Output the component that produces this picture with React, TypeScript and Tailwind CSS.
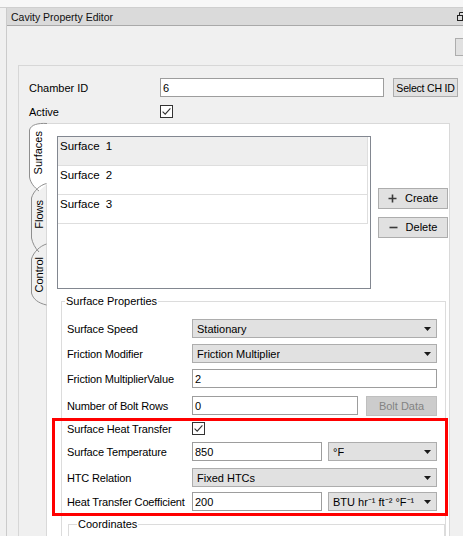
import React from "react";

function Arrow() {
  return (
    <svg width="7" height="4" viewBox="0 0 7 4" className="shrink-0">
      <path d="M0 0 L7 0 L3.5 4 Z" fill="#1a1a1a" />
    </svg>
  );
}

function Combo({ value, w }: { value: string; w: string }) {
  return (
    <div className={`${w} h-[19px] shrink-0 bg-[#e1e1e1] border border-[#adadad] flex items-center justify-between pl-[4px] pr-[5px]`}>
      <span className="truncate">{value}</span>
      <Arrow />
    </div>
  );
}

function Field({ value, w }: { value: string; w: string }) {
  return (
    <div className={`${w} h-[19px] shrink-0 bg-white border border-[#9d9d9d] flex items-center pl-[2px]`}>
      {value}
    </div>
  );
}

function Check() {
  return (
    <svg width="13" height="13" viewBox="0 0 13 13" className="shrink-0">
      <rect x="0.5" y="0.5" width="12" height="12" fill="#fff" stroke="#333" />
      <path d="M2.6 6.6 L5.2 9.2 L10.4 3.4" fill="none" stroke="#333" strokeWidth="1.1" />
    </svg>
  );
}

function Row({ label, children, className = "" }: { label: string; children: React.ReactNode; className?: string }) {
  return (
    <div className={`flex items-center h-[19px] ${className}`}>
      <span className="w-[125px] shrink-0 whitespace-nowrap tracking-[-0.15px]">{label}</span>
      {children}
    </div>
  );
}

export default function App() {
  return (
    <div className="w-[463px] h-[536px] overflow-hidden bg-[#f0f0f0] text-[11px] leading-[14px] text-black font-['Liberation_Sans',Arial,sans-serif] flex flex-col">
      {/* Oberer Rand */}
      <div className="h-[8px] shrink-0 bg-[#f7f7f7] border-b border-[#cfcfcf]" />

      <div className="flex flex-1 min-h-0">
        <div className="w-[7px] shrink-0 border-r border-[#cbcbcb]" />

        <div className="flex-1 min-w-0 flex flex-col">
          {/* Dock-Titel */}
          <div className="h-[18px] shrink-0 bg-[#dadada] border-b border-[#a9a9a9] flex items-center pl-[4px]">
            <span className="text-[10.5px] text-[#111]">Cavity Property Editor</span>
            <svg width="9" height="9" viewBox="0 0 9 9" className="ml-auto -mr-[3px]">
              <rect x="0.5" y="3.5" width="5" height="5" fill="none" stroke="#222" />
              <path d="M2.5 3.5 V0.5 H8.5 V6.5 H5.5" fill="none" stroke="#222" />
            </svg>
          </div>

          <div className="h-[39px] shrink-0 flex justify-end pt-[12px]">
            <div className="w-[20px] h-[18px] -mr-[12px] bg-[#e1e1e1] border border-[#adadad]" />
          </div>

          {/* Rahmen */}
          <div className="ml-[11px] flex-1 flex flex-col border-t border-l border-[#d7d7d7] pl-[10px] pt-[12px]">
            <div className="flex items-center h-[19px]">
              <span className="w-[131px] shrink-0">Chamber ID</span>
              <Field value="6" w="w-[224px]" />
              <button className="ml-[9px] w-[65px] h-[19px] shrink-0 bg-[#e1e1e1] border border-[#adadad] text-[10.5px] whitespace-nowrap px-0 tracking-[-0.2px]">
                Select CH ID
              </button>
            </div>
            <div className="flex items-center h-[13px] mt-[8px]">
              <span className="w-[131px] shrink-0">Active</span>
              <Check />
            </div>

            {/* Tab-Widget */}
            <div className="flex flex-1 mt-[3px] -ml-[1px]">
              <div className="relative z-10 w-[19px] h-[186px] -mr-[1px] shrink-0 flex flex-col">
                <svg width="19" height="186" viewBox="0 0 19 186" className="absolute inset-0">
                  <path d="M19 2 C10 1.5 3 3 1.5 9 L1.5 56 C2.5 62 6 66 11 70 L19 63 Z" fill="#fff" />
                  <path d="M19 2.5 C10 2 3 3.5 1.5 9 L1.5 56 C2.5 62 6 66 11 70" fill="none" stroke="#8f8f8f" />
                  <path d="M18.5 62.5 C12 64 5.5 70 3.5 77 L3.5 117 C4.5 122 7 127 11 131" fill="none" stroke="#8f8f8f" />
                  <path d="M18.5 123 C12 125 5.5 131 3.5 138 L3.5 172 C5 178 10 182 18.5 184" fill="none" stroke="#8f8f8f" />
                </svg>
                <div className="relative h-[64px] flex items-center justify-center">
                  <span className="[writing-mode:vertical-rl] rotate-180">Surfaces</span>
                </div>
                <div className="relative h-[58px] flex items-center justify-center pl-[2px]">
                  <span className="[writing-mode:vertical-rl] rotate-180">Flows</span>
                </div>
                <div className="relative h-[64px] flex items-center justify-center pl-[2px]">
                  <span className="[writing-mode:vertical-rl] rotate-180">Control</span>
                </div>
              </div>

              <div className="w-[404px] mt-[2px] shrink-0 bg-white border-t border-l border-r border-[#d9d9d9] pl-[10px] pt-[12px] flex flex-col">
                <div className="flex items-center">
                  <div className="w-[314px] h-[153px] shrink-0 bg-white border border-[#828790] flex flex-col">
                    {["Surface 1", "Surface 2", "Surface 3"].map((s, i) => (
                      <div
                        key={s}
                        className={`h-[29px] mr-[2px] border-b border-r border-[#dedede] pl-[2px] pt-[2px] text-[11.5px] [word-spacing:3px] ${i === 0 ? "bg-[#eeeeee]" : ""}`}
                      >
                        {s}
                      </div>
                    ))}
                  </div>
                  <div className="ml-[7px] flex flex-col gap-[8px]">
                    <button className="w-[70px] h-[21px] bg-[#e1e1e1] border border-[#adadad] flex items-center justify-center gap-[8px]">
                      <svg width="9" height="9" viewBox="0 0 9 9">
                        <path d="M4.5 0.5 V8.5 M0.5 4.5 H8.5" stroke="#3a3a3a" strokeWidth="1.6" />
                      </svg>
                      Create
                    </button>
                    <button className="w-[70px] h-[21px] bg-[#e1e1e1] border border-[#adadad] flex items-center justify-center gap-[8px]">
                      <svg width="9" height="9" viewBox="0 0 9 9">
                        <path d="M0.5 4.5 H8.5" stroke="#3a3a3a" strokeWidth="1.6" />
                      </svg>
                      Delete
                    </button>
                  </div>
                </div>

                {/* Surface Properties */}
                <fieldset className="mt-[5px] ml-[4px] w-[385px] border border-[#dcdcdc]">
                  <legend className="ml-[3px] px-[1px] leading-[14px]">Surface Properties</legend>
                  <div className="pl-[5px] pr-[8px]">
                    <Row label="Surface Speed" className="mt-[11px]">
                      <Combo value="Stationary" w="w-[245px]" />
                    </Row>
                    <Row label="Friction Modifier" className="mt-[6px]">
                      <Combo value="Friction Multiplier" w="w-[245px]" />
                    </Row>
                    <Row label="Friction MultiplierValue" className="mt-[6px]">
                      <Field value="2" w="w-[245px]" />
                    </Row>
                    <div className="flex items-start h-[20px] mt-[8px]">
                      <span className="w-[125px] h-[19px] shrink-0 flex items-center tracking-[-0.15px]">Number of Bolt Rows</span>
                      <Field value="0" w="w-[166px]" />
                      <button className="ml-[8px] w-[71px] h-[20px] shrink-0 bg-[#cccccc] border border-[#bfbfbf] text-[#838383]">
                        Bolt Data
                      </button>
                    </div>
                  </div>

                  {/* Markierung */}
                  <div className="mt-[2px] -ml-[10px] -mr-[3px] border-[3px] border-[#ff0000] pl-[12px] pr-[8px] pb-[2px]">
                    <div className="flex items-center h-[13px] mt-[1px]">
                      <span className="w-[125px] shrink-0 tracking-[-0.15px]">Surface Heat Transfer</span>
                      <Check />
                    </div>
                    <Row label="Surface Temperature" className="mt-[7px]">
                      <Field value="850" w="w-[130px]" />
                      <div className="ml-[6px]">
                        <Combo value="°F" w="w-[109px]" />
                      </div>
                    </Row>
                    <Row label="HTC Relation" className="mt-[7px]">
                      <Combo value="Fixed HTCs" w="w-[245px]" />
                    </Row>
                    <Row label="Heat Transfer Coefficient" className="mt-[5px]">
                      <Field value="200" w="w-[130px]" />
                      <div className="ml-[6px]">
                        <Combo value="BTU hr⁻¹ ft⁻² °F⁻¹" w="w-[109px]" />
                      </div>
                    </Row>
                  </div>

                  <fieldset className="mt-[1px] ml-[6px] h-[40px] border border-[#dcdcdc]">
                    <legend className="ml-[8px] px-[1px] leading-[14px]">Coordinates</legend>
                  </fieldset>
                </fieldset>
              </div>
            </div>
          </div>
        </div>
      </div>
    </div>
  );
}
